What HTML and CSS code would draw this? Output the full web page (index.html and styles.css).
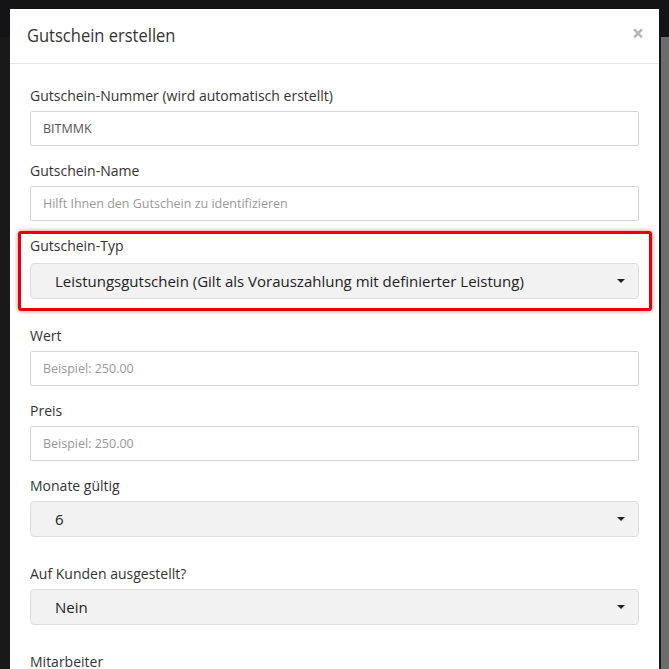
FILE: index.html
```html
<!DOCTYPE html>
<html lang="de">
<head>
<meta charset="utf-8">
<title>Gutschein erstellen</title>
<link rel="stylesheet" href="styles.css">
</head>
<body>
<div class="page">
  <div class="modal">
    <div class="modal-header">
      <h4 class="modal-title">Gutschein erstellen</h4>
      <span class="close">&times;</span>
    </div>
    <div class="modal-body">
      <div class="group">
        <label class="label">Gutschein-Nummer (wird automatisch erstellt)</label>
        <div class="input value">BITMMK</div>
      </div>
      <div class="group">
        <label class="label">Gutschein-Name</label>
        <div class="input placeholder">Hilft Ihnen den Gutschein zu identifizieren</div>
      </div>
      <div class="highlight">
        <label class="label label-typ">Gutschein-Typ</label>
        <div class="select"><span>Leistungsgutschein (Gilt als Vorauszahlung mit definierter Leistung)</span><span class="caret"></span></div>
      </div>
      <div class="group">
        <label class="label">Wert</label>
        <div class="input placeholder">Beispiel: 250.00</div>
      </div>
      <div class="group">
        <label class="label">Preis</label>
        <div class="input placeholder">Beispiel: 250.00</div>
      </div>
      <div class="group group-select">
        <label class="label">Monate gültig</label>
        <div class="select"><span>6</span><span class="caret"></span></div>
      </div>
      <div class="group group-select">
        <label class="label">Auf Kunden ausgestellt?</label>
        <div class="select"><span>Nein</span><span class="caret"></span></div>
      </div>
      <div class="group group-last">
        <label class="label">Mitarbeiter</label>
      </div>
    </div>
  </div>
</div>
</body>
</html>
```

FILE: styles.css
```css
html, body {
  margin: 0;
  padding: 0;
  height: 100%;
  overflow: hidden;
}
body {
  font-family: "Open Sans", "Noto Sans", sans-serif;
  background:
    linear-gradient(#6c6c6c, #6c6c6c) right 0 top 37px / 8px 100% no-repeat,
    linear-gradient(#141416, #141416) 0 0 / 100% 37px no-repeat,
    #19191a;
}
.page {
  padding: 9px 10px 0 10px;
}
.modal {
  width: 649px;
  background: #fff;
  height: 660px;
  overflow: hidden;
}
.modal-header {
  display: flex;
  justify-content: space-between;
  align-items: center;
  height: 55px;
  box-sizing: border-box;
  padding: 0 15px 0 17px;
  border-bottom: 1px solid #e5e5e5;
}
.modal-title {
  margin: 0;
  font-size: 16.5px;
  font-weight: 400;
  color: #333;
  line-height: 24px;
  transform: scaleY(1.06);
}
.close {
  font-size: 21px;
  font-weight: 700;
  color: #b4b4b4;
  line-height: 1;
  margin-top: -6px;
}
.modal-body {
  padding: 22px 20px 0 20px;
}
.group {
  margin-bottom: 15px;
}
.group-select {
  margin-bottom: 27px;
}
.group-last {
  margin-bottom: 0;
}
.label {
  display: block;
  font-size: 14px;
  line-height: 20px;
  color: #333;
  margin-bottom: 5px;
}
.group-last .label {
  margin-bottom: 0;
}
.input {
  height: 35px;
  box-sizing: border-box;
  border: 1px solid #d4d4d4;
  border-radius: 2px;
  padding: 0 12px;
  display: flex;
  align-items: center;
  font-size: 12.5px;
}
.value {
  color: #555;
}
.placeholder {
  color: #999;
}
.highlight {
  margin: -5px -13px 15px -12px;
  padding: 2px 10px 9px 9px;
  border: 3px solid #e2000f;
  border-radius: 3px;
  box-shadow: 0 0 4px rgba(200, 0, 0, 0.55);
}
.label-typ {
  margin-bottom: 7px;
}
.select {
  height: 36px;
  box-sizing: border-box;
  background: #f2f2f2;
  border: 1px solid #dcdcdc;
  border-radius: 4px;
  padding: 0 13px 0 24px;
  display: flex;
  align-items: center;
  justify-content: space-between;
  font-size: 15px;
  color: #222;
}
.group-select .select {
  margin-top: 0;
}
.caret {
  width: 0;
  height: 0;
  border-left: 4px solid transparent;
  border-right: 4px solid transparent;
  border-top: 4px solid #222;
}
```
